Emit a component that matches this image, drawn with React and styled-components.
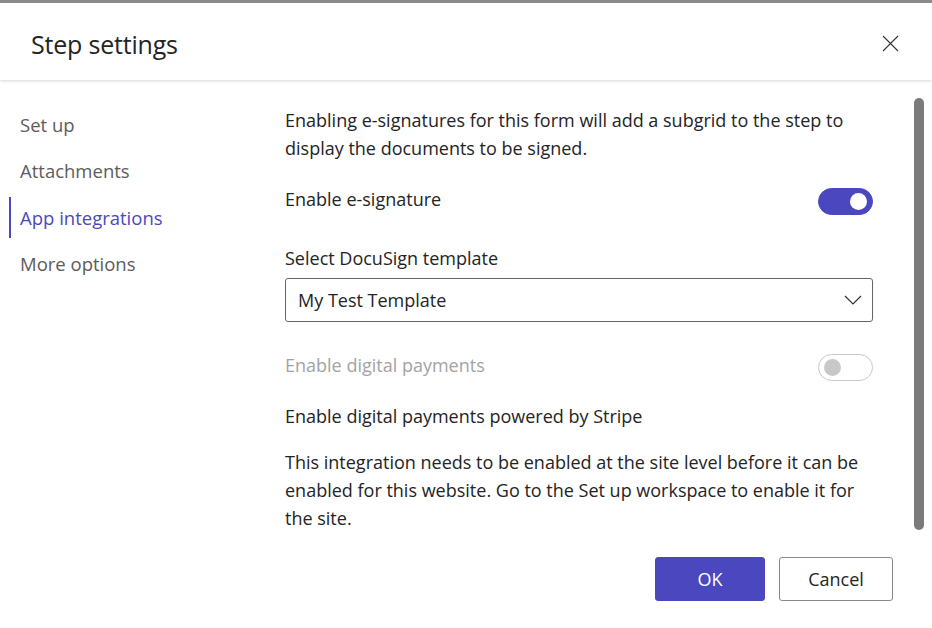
import React, { useState } from "react";
import styled, { createGlobalStyle } from "styled-components";

const GlobalStyle = createGlobalStyle`
  html, body {
    margin: 0;
    padding: 0;
    background: #ffffff;
  }
  body {
    font-family: "Open Sans", "Noto Sans", sans-serif;
    color: #242424;
  }
`;

const brand = "#4b48bf";

const Dialog = styled.div`
  width: 932px;
  height: 628px;
  display: flex;
  flex-direction: column;
  border-top: 3px solid #8a8a8a;
  box-sizing: border-box;
  background: #fff;
  overflow: hidden;
`;

const Header = styled.div`
  height: 77px;
  flex-shrink: 0;
  box-sizing: border-box;
  display: flex;
  align-items: center;
  justify-content: space-between;
  padding: 4px 33px 0 31px;
  box-shadow: 0 1px 3px rgba(0, 0, 0, 0.16);
  position: relative;
  z-index: 1;
`;

const Title = styled.h1`
  margin: 0;
  font-size: 25px;
  font-weight: 400;
  color: #242424;
  letter-spacing: -0.2px;
`;

const CloseButton = styled.button`
  border: none;
  background: none;
  padding: 0;
  width: 18px;
  height: 18px;
  display: flex;
  align-items: center;
  justify-content: center;
  cursor: pointer;
`;

const Body = styled.div`
  flex: 1;
  display: flex;
  min-height: 0;
`;

const Nav = styled.nav`
  width: 285px;
  flex-shrink: 0;
  padding-top: 21px;
  display: flex;
  flex-direction: column;
`;

const NavItem = styled.div`
  height: 46.5px;
  display: flex;
  align-items: center;
  padding-left: 20px;
  font-size: 18.5px;
  color: ${(p) => (p.$active ? brand : "#5c5c5c")};
  position: relative;
  cursor: pointer;

  &::before {
    content: "";
    display: ${(p) => (p.$active ? "block" : "none")};
    position: absolute;
    left: 9px;
    top: 3px;
    bottom: 3px;
    width: 2px;
    background: ${brand};
  }
`;

const Main = styled.div`
  flex: 1;
  display: flex;
  flex-direction: column;
  min-width: 0;
`;

const ScrollArea = styled.div`
  flex: 1;
  display: flex;
  padding-top: 26px;
  min-height: 0;
`;

const Content = styled.div`
  width: 588px;
  display: flex;
  flex-direction: column;
`;

const Scrollbar = styled.div`
  width: 10px;
  height: 432px;
  margin: -8px 0 0 41px;
  border-radius: 5px;
  background: #7b7b7b;
`;

const Text = styled.p`
  margin: ${(p) => p.$mt || 0}px 0 0;
  font-size: 18px;
  line-height: 28px;
  color: ${(p) => (p.$muted ? "#a3a3a3" : "#242424")};
`;

const ToggleRow = styled.div`
  display: flex;
  align-items: center;
  justify-content: space-between;
  height: 28px;
  margin-top: ${(p) => p.$mt}px;
  font-size: 18px;
  color: ${(p) => (p.$disabled ? "#a3a3a3" : "#242424")};
`;

const Track = styled.button`
  width: 55px;
  height: 27px;
  border-radius: 14px;
  box-sizing: border-box;
  padding: 0 5px;
  display: flex;
  align-items: center;
  justify-content: ${(p) => (p.$on ? "flex-end" : "flex-start")};
  background: ${(p) => (p.$on ? brand : "#fff")};
  border: 1px solid ${(p) => (p.$on ? brand : "#c8c8c8")};
  margin-top: 5px;
  cursor: ${(p) => (p.disabled ? "default" : "pointer")};
`;

const Knob = styled.span`
  width: 17px;
  height: 17px;
  border-radius: 50%;
  background: ${(p) => (p.$on ? "#fff" : "#c8c8c8")};
`;

const Select = styled.div`
  margin-top: 6px;
  height: 44px;
  box-sizing: border-box;
  border: 1px solid #666;
  border-radius: 3px;
  display: flex;
  align-items: center;
  justify-content: space-between;
  padding: 0 10px 0 12px;
  font-size: 18px;
  color: #242424;
`;

const Footer = styled.div`
  height: 83px;
  flex-shrink: 0;
  display: flex;
  justify-content: flex-end;
  align-items: flex-start;
  gap: 14px;
  padding: 12px 39px 0 0;
  box-sizing: border-box;
`;

const Button = styled.button`
  height: 44px;
  min-width: ${(p) => (p.$primary ? 110 : 114)}px;
  border-radius: 3px;
  font-family: inherit;
  font-size: 18px;
  cursor: pointer;
  background: ${(p) => (p.$primary ? brand : "#fff")};
  color: ${(p) => (p.$primary ? "#fff" : "#242424")};
  border: 1px solid ${(p) => (p.$primary ? brand : "#8a8a8a")};
`;

function Toggle({ on, disabled, onChange }) {
  return (
    <Track $on={on} disabled={disabled} onClick={() => !disabled && onChange(!on)}>
      <Knob $on={on} />
    </Track>
  );
}

const navItems = ["Set up", "Attachments", "App integrations", "More options"];

export default function App() {
  const [active, setActive] = useState("App integrations");
  const [esign, setEsign] = useState(true);

  return (
    <>
      <GlobalStyle />
      <Dialog>
        <Header>
          <Title>Step settings</Title>
          <CloseButton aria-label="Close">
            <svg width="17" height="17" viewBox="0 0 17 17">
              <path d="M1 1L16 16M16 1L1 16" stroke="#333" strokeWidth="1.1" fill="none" />
            </svg>
          </CloseButton>
        </Header>
        <Body>
          <Nav>
            {navItems.map((item) => (
              <NavItem key={item} $active={item === active} onClick={() => setActive(item)}>
                {item}
              </NavItem>
            ))}
          </Nav>
          <Main>
            <ScrollArea>
              <Content>
                <Text>
                  Enabling e-signatures for this form will add a subgrid to the step to display the
                  documents to be signed.
                </Text>
                <ToggleRow $mt={23}>
                  Enable e-signature
                  <Toggle on={esign} onChange={setEsign} />
                </ToggleRow>
                <Text $mt={31}>Select DocuSign template</Text>
                <Select>
                  My Test Template
                  <svg width="18" height="10" viewBox="0 0 18 10">
                    <path d="M1 1L9 9L17 1" stroke="#333" strokeWidth="1.2" fill="none" />
                  </svg>
                </Select>
                <ToggleRow $mt={29} $disabled>
                  Enable digital payments
                  <Toggle on={false} disabled />
                </ToggleRow>
                <Text $mt={23}>Enable digital payments powered by Stripe</Text>
                <Text $mt={18}>
                  This integration needs to be enabled at the site level before it can be enabled for
                  this website. Go to the Set up workspace to enable it for the site.
                </Text>
              </Content>
              <Scrollbar />
            </ScrollArea>
            <Footer>
              <Button $primary>OK</Button>
              <Button>Cancel</Button>
            </Footer>
          </Main>
        </Body>
      </Dialog>
    </>
  );
}
